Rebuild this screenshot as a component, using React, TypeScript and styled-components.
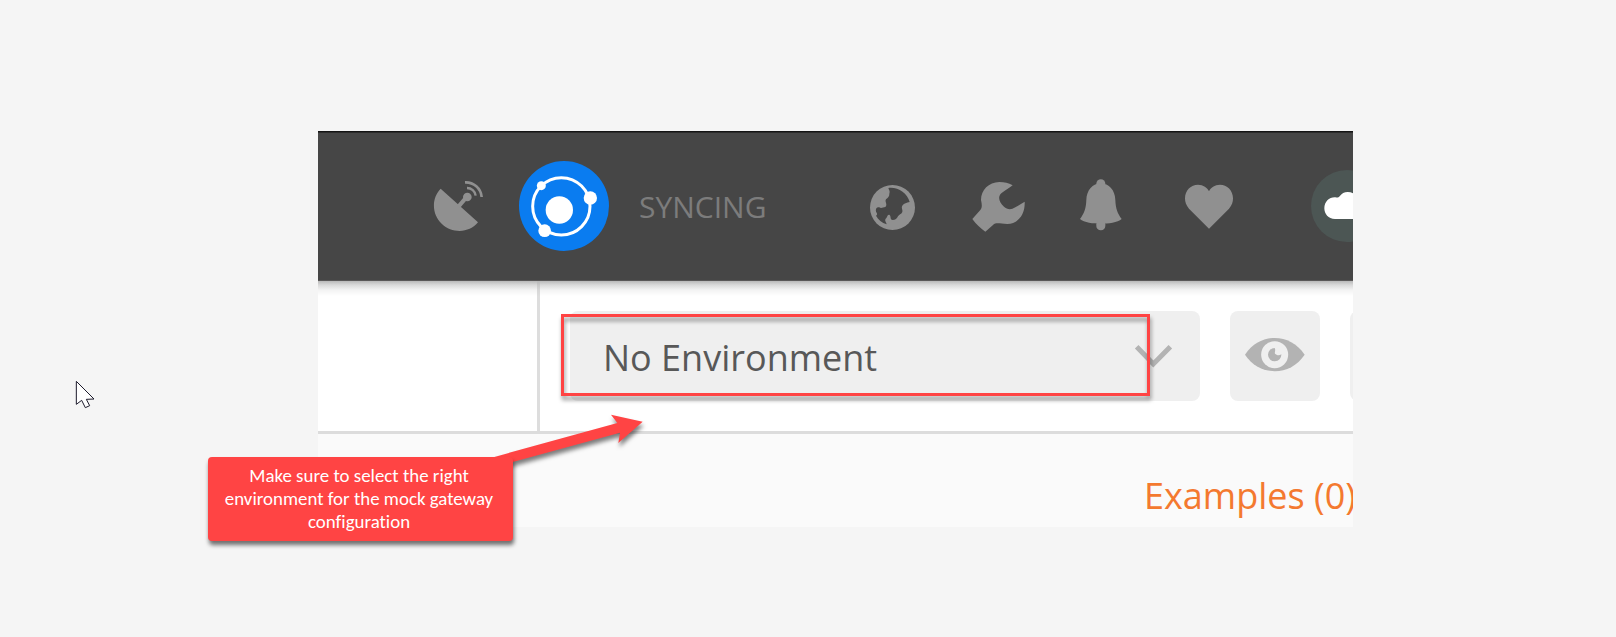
import React from 'react';
import styled, { createGlobalStyle } from 'styled-components';

const GlobalStyle = createGlobalStyle`
  * { box-sizing: border-box; }
  body { margin: 0; background: #f5f5f5; }
  svg { display: block; }
`;

const Page = styled.main`
  position: relative;
  width: 1616px;
  height: 637px;
  padding: 131px 263px 110px 318px;
  overflow: hidden;
  background: #f5f5f5;
  font-family: 'Open Sans', 'Noto Sans', sans-serif;
`;

const AppWindow = styled.section`
  display: flex;
  flex-direction: column;
  width: 1035px;
  height: 396px;
  overflow: hidden;
  background: #fafafa;
`;

const Header = styled.header`
  display: flex;
  align-items: flex-start;
  flex: 0 0 150px;
  background: #464646;
  box-shadow: inset 0 1px 0 #141414, inset 0 2px 0 #2c2c2c, inset 0 -1px 0 #5a5858;
  color: #909090;
`;

const IconSlot = styled.span<{ $before: number; $top: number }>`
  flex: none;
  margin: ${(p) => p.$top}px 0 0 ${(p) => p.$before}px;
`;

const SyncLabel = styled.span`
  flex: 0 0 231px;
  margin: 55px 0 0 30px;
  font-size: 30px;
  font-weight: 400;
  line-height: 42px;
  color: #7c7c7c;
`;

const EnvironmentBar = styled.div`
  display: flex;
  flex: 0 0 153px;
  border-bottom: 3px solid #dcdcdc;
  background: linear-gradient(#b9b9b9 0, #dadada 4px, #f3f3f3 9px, #fff 15px);
`;

const SidePane = styled.div`
  flex: 0 0 222px;
  border-right: 3px solid rgba(180, 180, 180, 0.45);
`;

const Controls = styled.div`
  display: flex;
  flex: none;
  gap: 30px;
  padding: 30px 0 0 30px;
`;

const Select = styled.div`
  display: flex;
  justify-content: space-between;
  width: 630px;
  height: 90px;
  padding: 0 27px 0 33px;
  border-radius: 8px;
  background: #efefef;
  font-size: 36px;
  line-height: 94px;
  color: #585858;
`;

const ChevronBox = styled.span`
  padding-top: 33px;
`;

const SquareButton = styled.div`
  width: 90px;
  height: 90px;
  padding: 26px 15px;
  border-radius: 8px;
  background: #efefef;
`;

const Examples = styled.div`
  padding: 38px 0 0 826px;
  font-size: 36px;
  line-height: 48px;
  white-space: nowrap;
  color: #f4792f;
`;

const Highlight = styled.div`
  position: absolute;
  left: 561px;
  top: 314px;
  width: 589px;
  height: 82px;
  border: 3px solid #ff4444;
  filter: drop-shadow(1px 4px 2px rgba(0, 0, 0, 0.42));
`;

const Arrow = styled.svg`
  position: absolute;
  left: 490px;
  top: 410px;
  overflow: visible;
  filter: drop-shadow(1px 4px 2px rgba(0, 0, 0, 0.5));
`;

const Callout = styled.div`
  position: absolute;
  left: 208px;
  top: 457px;
  width: 305px;
  height: 84px;
  padding: 7px 4px 0 1px;
  border-radius: 4px;
  background: #ff4444;
  box-shadow: 1px 4px 4px rgba(0, 0, 0, 0.55);
  font-family: Carlito, Lato, sans-serif;
  font-size: 18.9px;
  font-variant-ligatures: none;
  line-height: 23px;
  text-align: center;
  white-space: nowrap;
  color: #fff;
`;

const Cursor = styled.svg`
  position: absolute;
  left: 75px;
  top: 380px;
`;

const DishIcon = () => (
  <svg width="51" height="52" viewBox="369 180 153 156" fill="none" stroke="currentColor">
    <path d="M392 206C364 234 365 283 395 311C426 341 478 340 504 307Z" fill="currentColor" stroke="none" />
    <path d="M446 259L469 232" strokeWidth="12" />
    <circle cx="472" cy="231" r="13" fill="currentColor" stroke="none" />
    <path d="M471 204A26 26 0 0 1 497 227" strokeWidth="7" />
    <path d="M465 187A48 48 0 0 1 515 231" strokeWidth="8" />
  </svg>
);

const SyncLogo = () => (
  <svg width="90" height="90" viewBox="627 123 270 270" fill="#fff">
    <circle cx="762" cy="258" r="135" fill="#0a7cf0" />
    <circle cx="754" cy="259" r="86" fill="none" stroke="#fff" strokeWidth="9" />
    <circle cx="694" cy="197" r="13.5" />
    <circle cx="841" cy="234" r="20" />
    <circle cx="704" cy="332" r="19" />
    <circle cx="748" cy="270" r="41" />
  </svg>
);

const GlobeIcon = () => (
  <svg width="45" height="45" viewBox="750 195 135 135">
    <circle cx="817.5" cy="262.5" r="67.5" fill="currentColor" />
    <path
      d="M805 204C832 200 862 218 869 246C860 248 852 250 848 256C842 263 849 269 847 276C844 283 837 283 834 289C831 296 826 300 818 300C809 299 814 290 809 285C801 282 803 293 797 296C793 302 799 306 800 313C786 308 774 299 768 287C773 284 772 280 768 275C766 267 770 260 778 262C784 267 789 261 796 261C804 254 793 245 798 238C803 234 809 229 808 221C811 214 807 210 805 204Z"
      fill="#464646"
    />
  </svg>
);

const WrenchIcon = () => (
  <svg width="54" height="52" viewBox="126 183 162 156" fill="currentColor">
    <path d="M248 196C235 188 224 186 208 186C176 187 153 210 153 240C156 254 157 263 151 270L127 297C138 312 152 326 166 335L189 315C199 306 210 312 232 312C263 311 286 285 284 245L256 262C242 271 231 268 222 260C206 246 203 230 214 220C224 211 238 205 248 196Z" />
  </svg>
);

const BellIcon = () => (
  <svg width="43" height="52" viewBox="447 177 129 156" fill="currentColor">
    <circle cx="512.5" cy="191" r="13.5" />
    <path d="M512 190C488 191 470 210 469 240C468 266 463 280 450 297C462 308 490 311 512 311C535 311 563 308 575 297C562 280 557 266 556 240C555 210 537 191 512 190Z" />
    <rect x="499" y="300" width="27" height="31" rx="13" />
  </svg>
);

const HeartIcon = () => (
  <svg width="48" height="45" viewBox="765 192 144 135" fill="currentColor">
    <path d="M837 326L777 266C768 256 765 246 765 235C765 211 783 194 804 194C820 194 832 203 837 214C842 203 854 194 870 194C891 194 909 211 909 235C909 246 906 256 897 266Z" />
  </svg>
);

const CloudBadge = () => (
  <svg width="72" height="72" viewBox="453 150 216 216">
    <circle cx="561" cy="258" r="108" fill="#4c5654" />
    <path
      d="M525 297C505 297 493 282 493 265C493 245 508 231 526 232C531 233 535 234 539 229C545 220 553 216 563 216C576 216 586 222 592 232C614 234 628 246 628 265C628 284 614 297 596 297Z"
      fill="#fff"
    />
  </svg>
);

const ChevronIcon = () => (
  <svg width="39" height="24" viewBox="222 162 117 72" fill="none">
    <path d="M230 170L280 222L331 170" stroke="#b3b3b3" strokeWidth="15" />
  </svg>
);

const EyeIcon = () => (
  <svg width="60" height="35" viewBox="555 141 180 105">
    <path d="M555 194C599 127 690 127 734 194C690 260 599 260 555 194Z" fill="#b3b3b3" />
    <circle cx="644" cy="194" r="40.5" fill="#efefef" />
    <path d="M644 174A20 20 0 1 0 664 193C657 198 649 195 645 191C643 186 648 181 644 174Z" fill="#b3b3b3" />
  </svg>
);

export default function App() {
  return (
    <>
      <GlobalStyle />
      <Page>
        <AppWindow>
          <Header>
            <IconSlot $before={115} $top={49}><DishIcon /></IconSlot>
            <IconSlot $before={35} $top={30}><SyncLogo /></IconSlot>
            <SyncLabel>SYNCING</SyncLabel>
            <IconSlot $before={0} $top={54}><GlobeIcon /></IconSlot>
            <IconSlot $before={57} $top={50}><WrenchIcon /></IconSlot>
            <IconSlot $before={53} $top={48}><BellIcon /></IconSlot>
            <IconSlot $before={63} $top={53}><HeartIcon /></IconSlot>
            <IconSlot $before={78} $top={39}><CloudBadge /></IconSlot>
          </Header>
          <EnvironmentBar>
            <SidePane />
            <Controls>
              <Select>
                No Environment
                <ChevronBox><ChevronIcon /></ChevronBox>
              </Select>
              <SquareButton><EyeIcon /></SquareButton>
              <SquareButton />
            </Controls>
          </EnvironmentBar>
          <Examples>Examples (0)</Examples>
        </AppWindow>

        <Highlight />
        <Arrow width="160" height="60" viewBox="900 30 480 180">
          <path d="M905 173L1282 69L1263 44L1358 65L1285 129L1290 98L960 188Z" fill="#ff4444" />
        </Arrow>
        <Callout>
          Make sure to select the right
          <br />
          environment for the mock gateway
          <br />
          configuration
        </Callout>
        <Cursor width="20" height="29" viewBox="45 30 60 87">
          <path
            d="M49 34V103L65 91L76 113L89 107L79 88L102 87Z"
            fill="#fff"
            stroke="#1c1a2b"
            strokeWidth="3"
          />
        </Cursor>
      </Page>
    </>
  );
}
